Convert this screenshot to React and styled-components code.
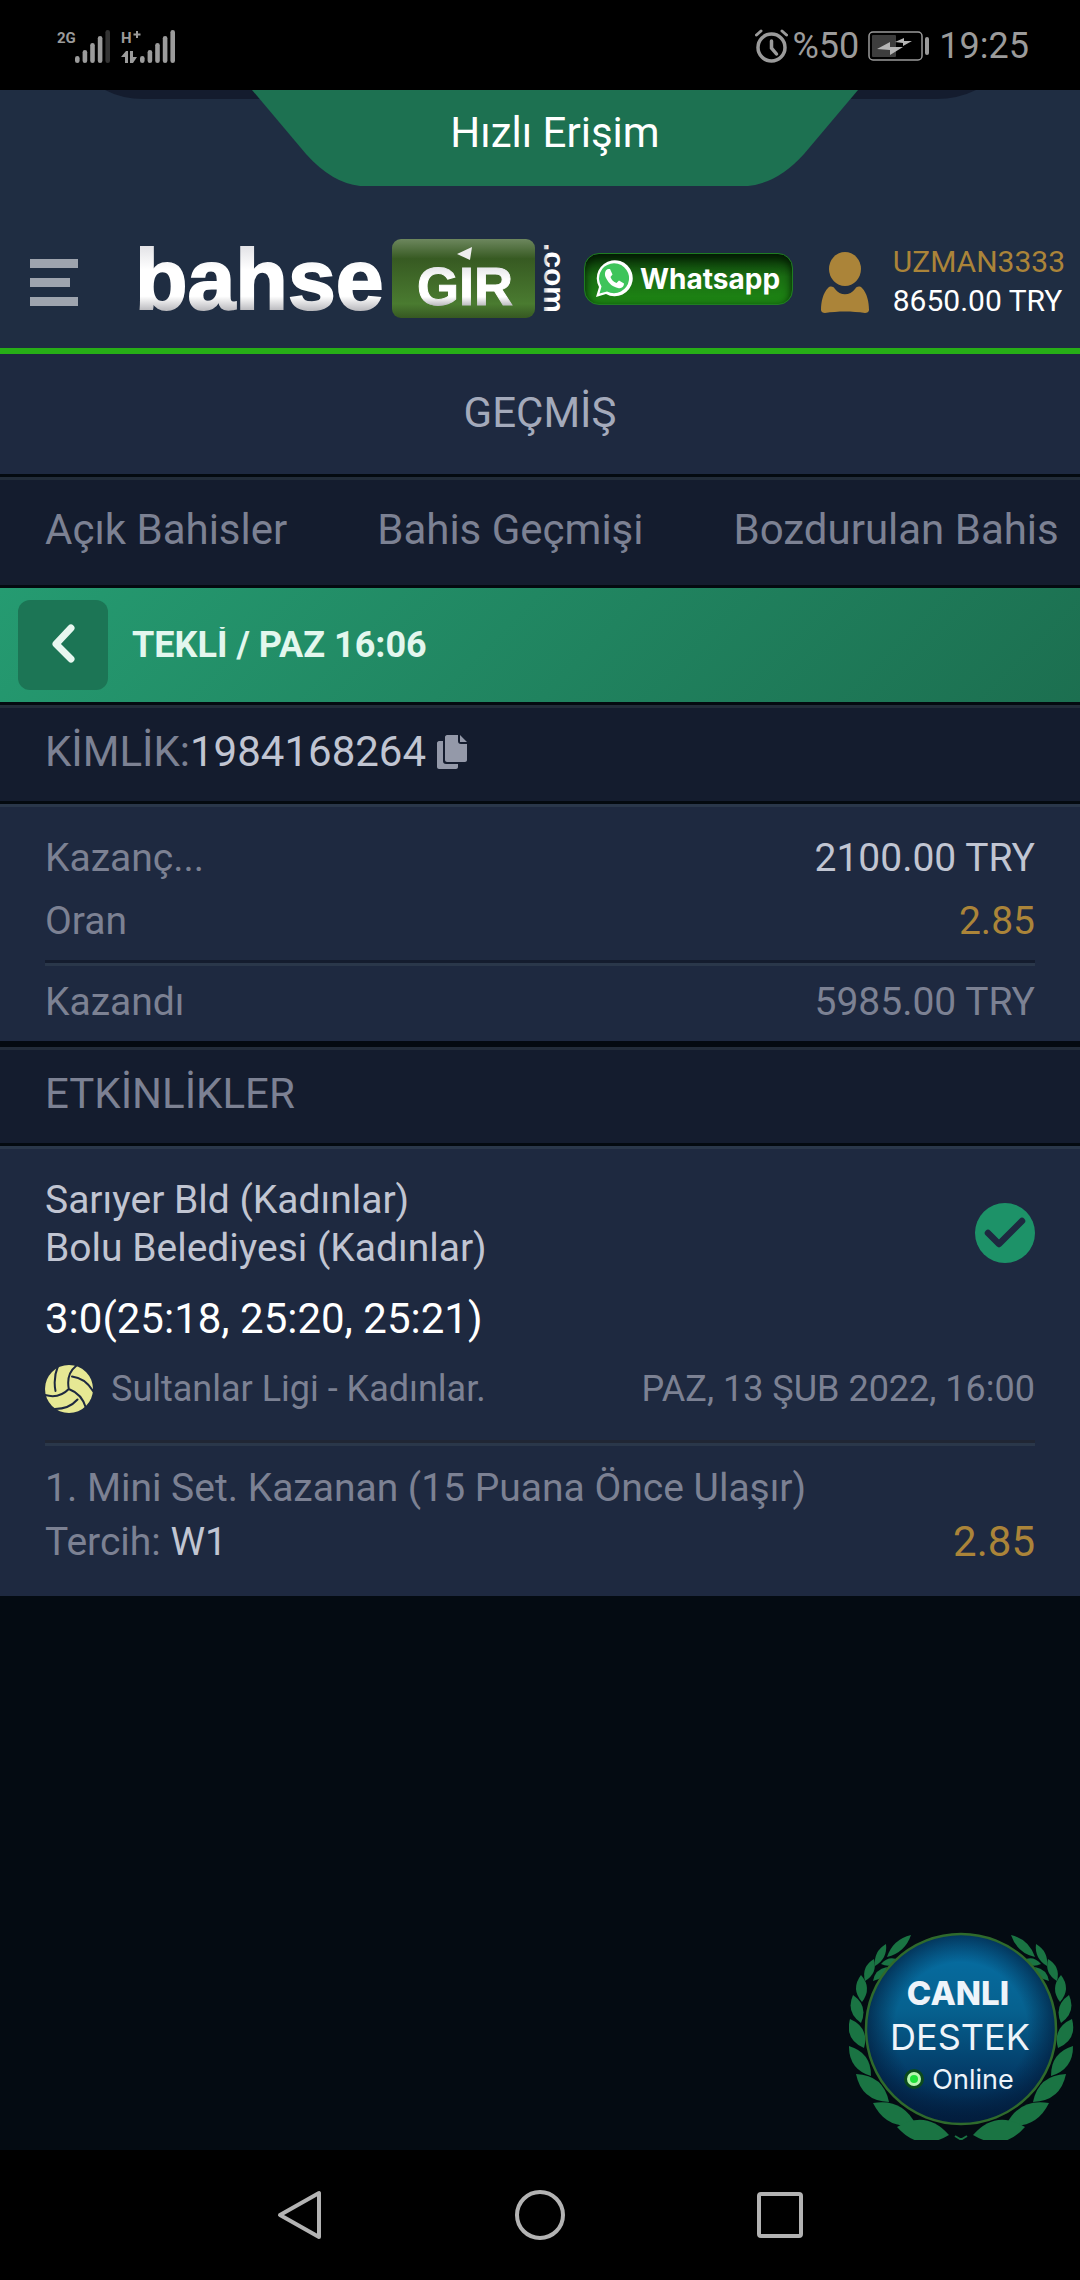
import React, {useState} from 'react';
import styled, {createGlobalStyle} from 'styled-components';

const tabs = ['Açık Bahisler', 'Bahis Geçmişi', 'Bozdurulan Bahis'];

const signalBars = [26, 20, 13, 6, 0];

// base point, tip point and half width of every leaf on the left branch
const leaves = [
    [38, 25, 62, 3, 9],
    [26, 34, 37, 12, 8],
    [32, 32, 50, 28, 7],
    [16, 49, 25, 27, 9],
    [24, 49, 38, 35, 7],
    [13, 70, 12, 43, 11],
    [12, 91, 4, 63, 12],
    [15, 116, 1, 87, 14],
    [22, 144, 0, 114, 14],
    [40, 170, 7, 142, 17],
    [67, 193, 24, 171, 18],
    [100, 203, 48, 195, 22],
];

const leafPath = ([x1, y1, x2, y2, w]) => {
    const length = Math.hypot(x2 - x1, y2 - y1);
    const nx = (-(y2 - y1) / length) * w;
    const ny = ((x2 - x1) / length) * w;
    const mx = (x1 + x2) / 2;
    const my = (y1 + y2) / 2;
    return `M${x1} ${y1}Q${mx + nx} ${my + ny} ${x2} ${y2}Q${mx - nx} ${my - ny} ${x1} ${y1}Z`;
};

const SignalBars = ({x, weakFrom = 5}) => signalBars.map((top, i) => (
    <rect
        key={top}
        x={x + i * 7.6}
        y={top}
        width="4.6"
        height={33 - top}
        rx="2.3"
        fill={i >= weakFrom ? '#333' : '#9b9b9b'}
    />
));

const StatusBar = () => (
    <Status>
        <StatusGroup>
            <svg width="54" height="41" viewBox="0 -4 54 41">
                <SmallLabel x="0" y="13">2G</SmallLabel>
                <SignalBars x={18} weakFrom={4} />
            </svg>
            <svg width="55" height="41" viewBox="0 -4 55 41">
                <SmallLabel x="0" y="13">H</SmallLabel>
                <path d="M16 1v7M12.500 4.500h7" stroke="#9b9b9b" strokeWidth="2" />
                <path d="M0 27l5-6h2v12H4v-6zM16 27l-4 6H9V21h3v6z" fill="#9b9b9b" />
                <SignalBars x={19} />
            </svg>
        </StatusGroup>
        <StatusGroup $end>
            <svg width="33" height="34" viewBox="0 0 33 34" fill="none" stroke="#9b9b9b" strokeLinecap="round">
                <circle cx="16.500" cy="18.500" r="13.500" strokeWidth="3.500" />
                <path d="M16.500 12v7l5 6" strokeWidth="3.500" />
                <path d="M1.500 6l4.500-4M31.500 6L27 2" strokeWidth="3" />
            </svg>
            <span>%50</span>
            <Battery width="62" height="30" viewBox="0 0 62 30">
                <rect x="1" y="1" width="53" height="28" rx="4" fill="none" stroke="#9b9b9b" strokeWidth="1.500" />
                <rect x="4" y="4" width="24" height="22" rx="1" fill="#3d3d3d" />
                <path d="M9 18l13-7v5h13l-13 8v-5zM27 11l9-4v3h8l-9 5v-3z" fill="#b5b5b5" />
                <rect x="57" y="6" width="4" height="18" rx="2" fill="#9b9b9b" />
            </Battery>
            <span>19:25</span>
        </StatusGroup>
    </Status>
);

const Logo = () => (
    <LogoLink href="#home" aria-label="bahsegir.com">
        <svg width="440" height="96" viewBox="-8 -8 440 96">
            <defs>
                <linearGradient id="chrome" x1="0" y1="0" x2="0" y2="1">
                    <stop offset="0.15" stopColor="#e2e2e6" />
                    <stop offset="0.4" stopColor="#fff" />
                    <stop offset="0.68" stopColor="#fff" />
                    <stop offset="0.83" stopColor="#b9b9bd" />
                </linearGradient>
                <linearGradient id="plate" x1="0" y1="0" x2="0" y2="1">
                    <stop offset="0" stopColor="#6d875e" />
                    <stop offset="0.25" stopColor="#375a22" />
                    <stop offset="0.82" stopColor="#4a7b30" />
                    <stop offset="1" stopColor="#365822" />
                </linearGradient>
            </defs>
            <LogoWord x="-4" y="71" $size={86} $stroke={2}>bahse</LogoWord>
            <rect x="253" y="1" width="143" height="79" rx="9" fill="url(#plate)" />
            <LogoWord x="278" y="67" $size={54} $stroke={1}>GIR</LogoWord>
            <path d="M318 16l15-7-2 13z" fill="#eee" />
            <g transform="translate(405 5) rotate(90)">
                <LogoWord x="0" y="0" $size={30} $stroke={0}>.com</LogoWord>
            </g>
        </svg>
    </LogoLink>
);

const WhatsappIcon = () => (
    <svg width="38" height="38" viewBox="0 0 38 38">
        <path d="M1 37l3-10A18 18 0 1 1 11 34z" fill="#fff" />
        <path d="M4.500 33.500l2-7A15 15 0 1 1 12 31.500z" fill="#3ec45a" />
        <path
            d="M13 9c-3 1-4 5-2 9 3 6 7 9 12 10 4 1 6-2 6-4.500l-5-3-2.500 2.500c-3-1-5-3-6-6l2-2.500L15 9z"
            fill="#fff"
        />
    </svg>
);

const UserIcon = () => (
    <svg width="48" height="61" viewBox="0 0 48 61" fill="#ab8439">
        <ellipse cx="24" cy="17" rx="16" ry="17" />
        <path d="M7 36c2-2 5-2 7 1 5 7 15 7 20 0 2-3 5-3 7-1 5 5 7 14 7 22 0 2-2 3-4 3-13-2-27-2-40 0-2 0-4-1-4-3 0-8 2-17 7-22z" />
    </svg>
);

const CopyIcon = () => (
    <svg width="30" height="34" viewBox="0 0 30 34" fill="#9499a9">
        <path d="M2 6h4v20c0 2 1 3 3 3h12v3c0 1-1 2-2 2H2c-1 0-2-1-2-2V8c0-1 1-2 2-2z" />
        <path d="M10 0h11v6c0 2 1 3 3 3h6v16c0 1-1 2-2 2H10c-1 0-2-1-2-2V2c0-1 1-2 2-2zM23 0l7 7h-7z" />
    </svg>
);

const VolleyballIcon = () => (
    <svg width="48" height="48" viewBox="0 0 48 48">
        <circle cx="24" cy="24" r="24" fill="#e6e894" />
        <path
            d="M13 1Q8 13 10.500 26M31 1Q21 9 23.800 24Q37 29 41 43M27 11.500Q40 13 48 26M23.800 24Q14 34 0 30M32.500 34.500Q24 44 10 44"
            fill="none"
            stroke="#1e2940"
            strokeWidth="2"
            strokeLinecap="round"
        />
    </svg>
);

const WonIcon = () => (
    <svg width="60" height="60" viewBox="0 0 60 60" role="img" aria-label="Kazandı">
        <circle cx="30" cy="30" r="30" fill="#1d9268" />
        <path
            d="M13 30l11 11 23-23"
            fill="none"
            stroke="#1e2940"
            strokeWidth="6.500"
            strokeLinecap="round"
            strokeLinejoin="round"
        />
    </svg>
);

const LiveSupport = () => (
    <SupportLink href="#destek">
        <svg width="226" height="208" viewBox="0 0 226 208">
            <defs>
                <linearGradient id="sea" x1="0" y1="0" x2="0" y2="1">
                    <stop offset="0" stopColor="#0670a6" />
                    <stop offset="0.4" stopColor="#06618f" />
                    <stop offset="0.75" stopColor="#033a66" />
                    <stop offset="1" stopColor="#021c3c" />
                </linearGradient>
                <radialGradient id="rim">
                    <stop offset="0.7" stopColor="#021c3c" stopOpacity="0" />
                    <stop offset="1" stopColor="#021c3c" stopOpacity="0.7" />
                </radialGradient>
                <g id="branch" fill="#1a7443">
                    {leaves.map(leaf => <path key={leaf.join()} d={leafPath(leaf)} />)}
                </g>
            </defs>
            <use href="#branch" />
            <use href="#branch" transform="translate(224 0) scale(-1 1)" />
            <path d="M106 204l5 3h2l5-3" stroke="#1a7443" strokeWidth="2" fill="none" />
            <circle cx="112" cy="97" r="95" fill="url(#sea)" />
            <circle cx="112" cy="97" r="95" fill="url(#rim)" stroke="#2f6a2c" strokeWidth="2.500" />
            <SupportText x="109" y="73" $size={33} $weight={800}>CANLI</SupportText>
            <SupportText x="111" y="118" $size={36} $weight={400}>DESTEK</SupportText>
            <circle cx="65" cy="147" r="10" fill="#0b4a1c" />
            <circle cx="65" cy="147" r="7" fill="#b8f5b0" />
            <circle cx="65" cy="147" r="4" fill="#1fe03a" />
            <SupportText x="124" y="157" $size={27} $weight={400}>Online</SupportText>
        </svg>
    </SupportLink>
);

const App = () => {
    const [activeTab, setActiveTab] = useState('');

    return (
        <Page>
            <GlobalStyle />
            <StatusBar />
            <Header>
                <QuickBand>
                    <BandShape viewBox="0 0 1080 96">
                        <path d="M105 0Q122 9 144 9H936Q958 9 976 0z" fill="#141c2e" />
                        <path d="M252 0L306 64Q332 93 360 96H748Q778 93 804 64L858 0z" fill="#1d7151" />
                    </BandShape>
                    <QuickButton type="button">Hızlı Erişim</QuickButton>
                </QuickBand>
                <HeaderRow>
                    <PlainButton type="button" aria-label="Menü">
                        <svg width="48" height="48" viewBox="0 0 48 48" fill="#9ea4ae">
                            <path d="M0 1h48v9H0zM0 20h40v9H0zM0 39h48v9H0z" />
                        </svg>
                    </PlainButton>
                    <Logo />
                    <Whatsapp href="#whatsapp">
                        <WhatsappIcon />
                        Whatsapp
                    </Whatsapp>
                    <Account href="#hesap">
                        <UserIcon />
                        <AccountText>
                            <UserName>UZMAN3333</UserName>
                            <span>8650.00 TRY</span>
                        </AccountText>
                    </Account>
                </HeaderRow>
            </Header>

            <Title>GEÇMİŞ</Title>
            <Tabs>
                {tabs.map(tab => (
                    <Tab
                        key={tab}
                        type="button"
                        aria-pressed={activeTab === tab}
                        onClick={() => setActiveTab(tab)}
                    >{tab}</Tab>
                ))}
            </Tabs>

            <BetBar>
                <BackButton type="button" aria-label="Geri">
                    <svg width="24" height="40" viewBox="0 0 24 40">
                        <path
                            d="M20 5L5 21l15 15"
                            fill="none"
                            stroke="#e8f7f0"
                            strokeWidth="7"
                            strokeLinecap="round"
                            strokeLinejoin="round"
                        />
                    </svg>
                </BackButton>
                <BetName>TEKLİ / PAZ 16:06</BetName>
            </BetBar>

            <Strip>
                KİMLİK:<Bright>1984168264</Bright>
                <CopyButton type="button" aria-label="Kopyala">
                    <CopyIcon />
                </CopyButton>
            </Strip>

            <Summary>
                <Line>
                    <dt>Kazanç...</dt>
                    <Value $color="#c1c5d2">2100.00 TRY</Value>
                </Line>
                <Line>
                    <dt>Oran</dt>
                    <Value $color="#ab8439">2.85</Value>
                </Line>
                <Line $ruled>
                    <dt>Kazandı</dt>
                    <Value>5985.00 TRY</Value>
                </Line>
            </Summary>

            <Strip as="h2" $thick>ETKİNLİKLER</Strip>

            <Event>
                <TeamsRow>
                    <div>
                        <Team>Sarıyer Bld (Kadınlar)</Team>
                        <Team>Bolu Belediyesi (Kadınlar)</Team>
                    </div>
                    <Mark><WonIcon /></Mark>
                </TeamsRow>
                <Score>3:0(25:18, 25:20, 25:21)</Score>
                <LeagueRow>
                    <VolleyballIcon />
                    <span>Sultanlar Ligi - Kadınlar.</span>
                    <EventDate>PAZ, 13 ŞUB 2022, 16:00</EventDate>
                </LeagueRow>
                <Market>
                    <div>1. Mini Set. Kazanan (15 Puana Önce Ulaşır)</div>
                    <Pick>
                        <span>Tercih: <Bright>W1</Bright></span>
                        <Odds>2.85</Odds>
                    </Pick>
                </Market>
            </Event>

            <Rest>
                <LiveSupport />
            </Rest>

            <SystemNav>
                <PlainButton type="button" aria-label="Geri git">
                    <NavIcon viewBox="0 0 50 50">
                        <path d="M44 3v44L5 25z" />
                    </NavIcon>
                </PlainButton>
                <PlainButton type="button" aria-label="Ana ekran">
                    <NavIcon viewBox="0 0 50 50">
                        <circle cx="25" cy="25" r="23" />
                    </NavIcon>
                </PlainButton>
                <PlainButton type="button" aria-label="Son uygulamalar">
                    <NavIcon viewBox="0 0 50 50">
                        <rect x="4" y="4" width="42" height="42" rx="2" />
                    </NavIcon>
                </PlainButton>
            </SystemNav>
        </Page>
    );
}

export default App;

const GlobalStyle = createGlobalStyle`
    * {
        box-sizing: border-box;
    }
    body {
        margin: 0;
        background: #040b12;
        font-family: Roboto, "Liberation Sans", sans-serif;
    }
    h1, h2, dl, dt, dd {
        margin: 0;
        font-weight: 400;
    }
    button {
        font-family: inherit;
        cursor: pointer;
    }
    a {
        color: inherit;
        text-decoration: none;
    }
    svg {
        display: block;
        flex-shrink: 0;
    }
`;

const Page = styled.div`
    display: flex;
    flex-direction: column;
    min-height: 100vh;
    color: #7c8193;
    font-size: 39px;
    white-space: nowrap;
    overflow: hidden;
`;

const Status = styled.div`
    display: flex;
    justify-content: space-between;
    align-items: center;
    height: 90px;
    padding: 2px 51px 0 57px;
    background: #000;
    color: #9b9b9b;
    font-size: 36px;
    line-height: 42px;
`;

const StatusGroup = styled.div`
    display: flex;
    align-items: center;
    gap: ${({$end}) => $end ? '5px' : '10px'};
`;

const SmallLabel = styled.text`
    fill: #9b9b9b;
    font: bold 15px Roboto, sans-serif;
`;

const Battery = styled.svg`
    margin: 0 4px;
`;

const Header = styled.header`
    background: #1f2d42;
    border-bottom: 6px solid #27ae17;
`;

const QuickBand = styled.div`
    position: relative;
    display: flex;
    justify-content: center;
    height: 96px;
`;

const BandShape = styled.svg`
    position: absolute;
    top: 0;
    left: 0;
    width: 100%;
    height: 96px;
`;

const QuickButton = styled.button`
    position: relative;
    height: 84px;
    margin-left: 30px;
    padding: 0;
    border: 0;
    background: none;
    color: #fff;
    font-size: 42px;
`;

const HeaderRow = styled.div`
    display: flex;
    align-items: center;
    height: 162px;
    padding: 30px 15px 0 30px;
`;

const PlainButton = styled.button`
    padding: 0;
    border: 0;
    background: none;
`;

const LogoLink = styled.a`
    margin: 0 13px 8px 53px;
`;

const LogoWord = styled.text`
    fill: url(#chrome);
    stroke: url(#chrome);
    stroke-width: ${({$stroke}) => $stroke}px;
    font: bold ${({$size}) => $size}px "Liberation Sans", Arial, sans-serif;
`;

const Whatsapp = styled.a`
    display: flex;
    align-items: center;
    gap: 7px;
    height: 52px;
    margin-bottom: 6px;
    padding: 0 12px 0 10px;
    border: 1px solid #1f7d22;
    border-radius: 15px;
    background: linear-gradient(#072b06, #1a6d13 45%, #1d8813);
    box-shadow: inset 0 3px 8px #021802;
    color: #fff;
    font: bold 28px Inter, sans-serif;
`;

const Account = styled.a`
    display: flex;
    align-items: center;
    gap: 24px;
    margin-left: auto;
`;

const AccountText = styled.div`
    display: flex;
    flex-direction: column;
    padding-bottom: 3px;
    color: #fff;
    font-size: 30px;
    line-height: 39px;
`;

const UserName = styled.span`
    color: #ab8439;
`;

const Title = styled.h1`
    height: 120px;
    background: #1e2940;
    color: #a4aabb;
    font-size: 42px;
    line-height: 117px;
    text-align: center;
`;

const Tabs = styled.nav`
    display: flex;
    gap: 90px;
    height: 114px;
    padding: 0 45px 6px;
    border-top: 3px solid #040a10;
    border-bottom: 3px solid #040a10;
    background: #141c2e;
    box-shadow: inset 0 3px #222c39;
    overflow: hidden;
`;

const Tab = styled.button`
    flex-shrink: 0;
    padding: 3px 0 0;
    border: 0;
    background: none;
    color: #7c8193;
    font-size: 42px;
`;

const BetBar = styled.div`
    display: flex;
    align-items: center;
    gap: 24px;
    height: 114px;
    padding: 0 18px;
    background: linear-gradient(135deg, #259b71, #1c6f50);
`;

const BackButton = styled.button`
    display: flex;
    align-items: center;
    justify-content: center;
    width: 90px;
    height: 90px;
    padding: 0 0 4px;
    border: 0;
    border-radius: 12px;
    background: #1c7555;
`;

const BetName = styled.div`
    overflow: hidden;
    color: #e3f7ee;
    font-size: 36px;
    font-weight: 700;
    line-height: 36px;
`;

const Strip = styled.div`
    display: flex;
    align-items: center;
    padding: 23px 45px 26px;
    border-top: ${({$thick}) => $thick ? '6px' : '3px'} solid #040a10;
    border-bottom: 3px solid #040a10;
    background: #141c2e;
    box-shadow: inset 0 3px #222c39;
    font-size: 42px;
    line-height: 47px;
`;

const Bright = styled.span`
    color: #c1c5d2;
`;

const CopyButton = styled.button`
    margin-left: 11px;
    padding: 0;
    border: 0;
    background: none;
`;

const Summary = styled.dl`
    padding: 23px 45px 7px;
    background: #1e2940;
    box-shadow: inset 0 3px #2a374a;
`;

const Line = styled.div`
    display: flex;
    justify-content: space-between;
    line-height: 63px;
    ${({$ruled}) => $ruled && `
        margin-top: 7px;
        padding-top: 8px;
        border-top: 3px solid #141c2e;
        box-shadow: inset 0 3px #2a374a;
    `}
`;

const Value = styled.dd`
    color: ${({$color}) => $color || 'inherit'};
`;

const Event = styled.article`
    padding: 30px 45px 27px;
    background: #1e2940;
    box-shadow: inset 0 3px #2a374a;
`;

const TeamsRow = styled.div`
    display: flex;
    justify-content: space-between;
    align-items: center;
`;

const Team = styled.div`
    color: #c1c5d2;
    line-height: 48px;
`;

const Mark = styled.div`
    margin-top: 18px;
`;

const Score = styled.div`
    margin-top: 20px;
    color: #fff;
    font-size: 42px;
    line-height: 54px;
`;

const LeagueRow = styled.div`
    display: flex;
    align-items: center;
    gap: 18px;
    margin-top: 19px;
    font-size: 36px;
    line-height: 48px;
`;

const EventDate = styled.time`
    margin-left: auto;
`;

const Market = styled.div`
    margin-top: 27px;
    padding-top: 18px;
    border-top: 3px solid #202634;
    box-shadow: inset 0 3px #2a374a;
    line-height: 54px;
`;

const Pick = styled.div`
    display: flex;
    justify-content: space-between;
    align-items: center;
`;

const Odds = styled.span`
    color: #ab8439;
    font-size: 42px;
`;

const Rest = styled.div`
    display: flex;
    flex: 1;
    justify-content: flex-end;
    align-items: flex-end;
    padding: 10px 5px;
`;

const SupportLink = styled.a`
    display: block;
`;

const SupportText = styled.text`
    fill: #eef4fa;
    font: ${({$weight}) => $weight} ${({$size}) => $size}px Inter, sans-serif;
    text-anchor: middle;
`;

const SystemNav = styled.nav`
    display: flex;
    justify-content: center;
    align-items: center;
    gap: 190px;
    height: 130px;
    background: #000;
`;

const NavIcon = styled.svg`
    width: 50px;
    height: 50px;
    fill: none;
    stroke: #b3b3b3;
    stroke-width: 4px;
    stroke-linejoin: round;
`;
